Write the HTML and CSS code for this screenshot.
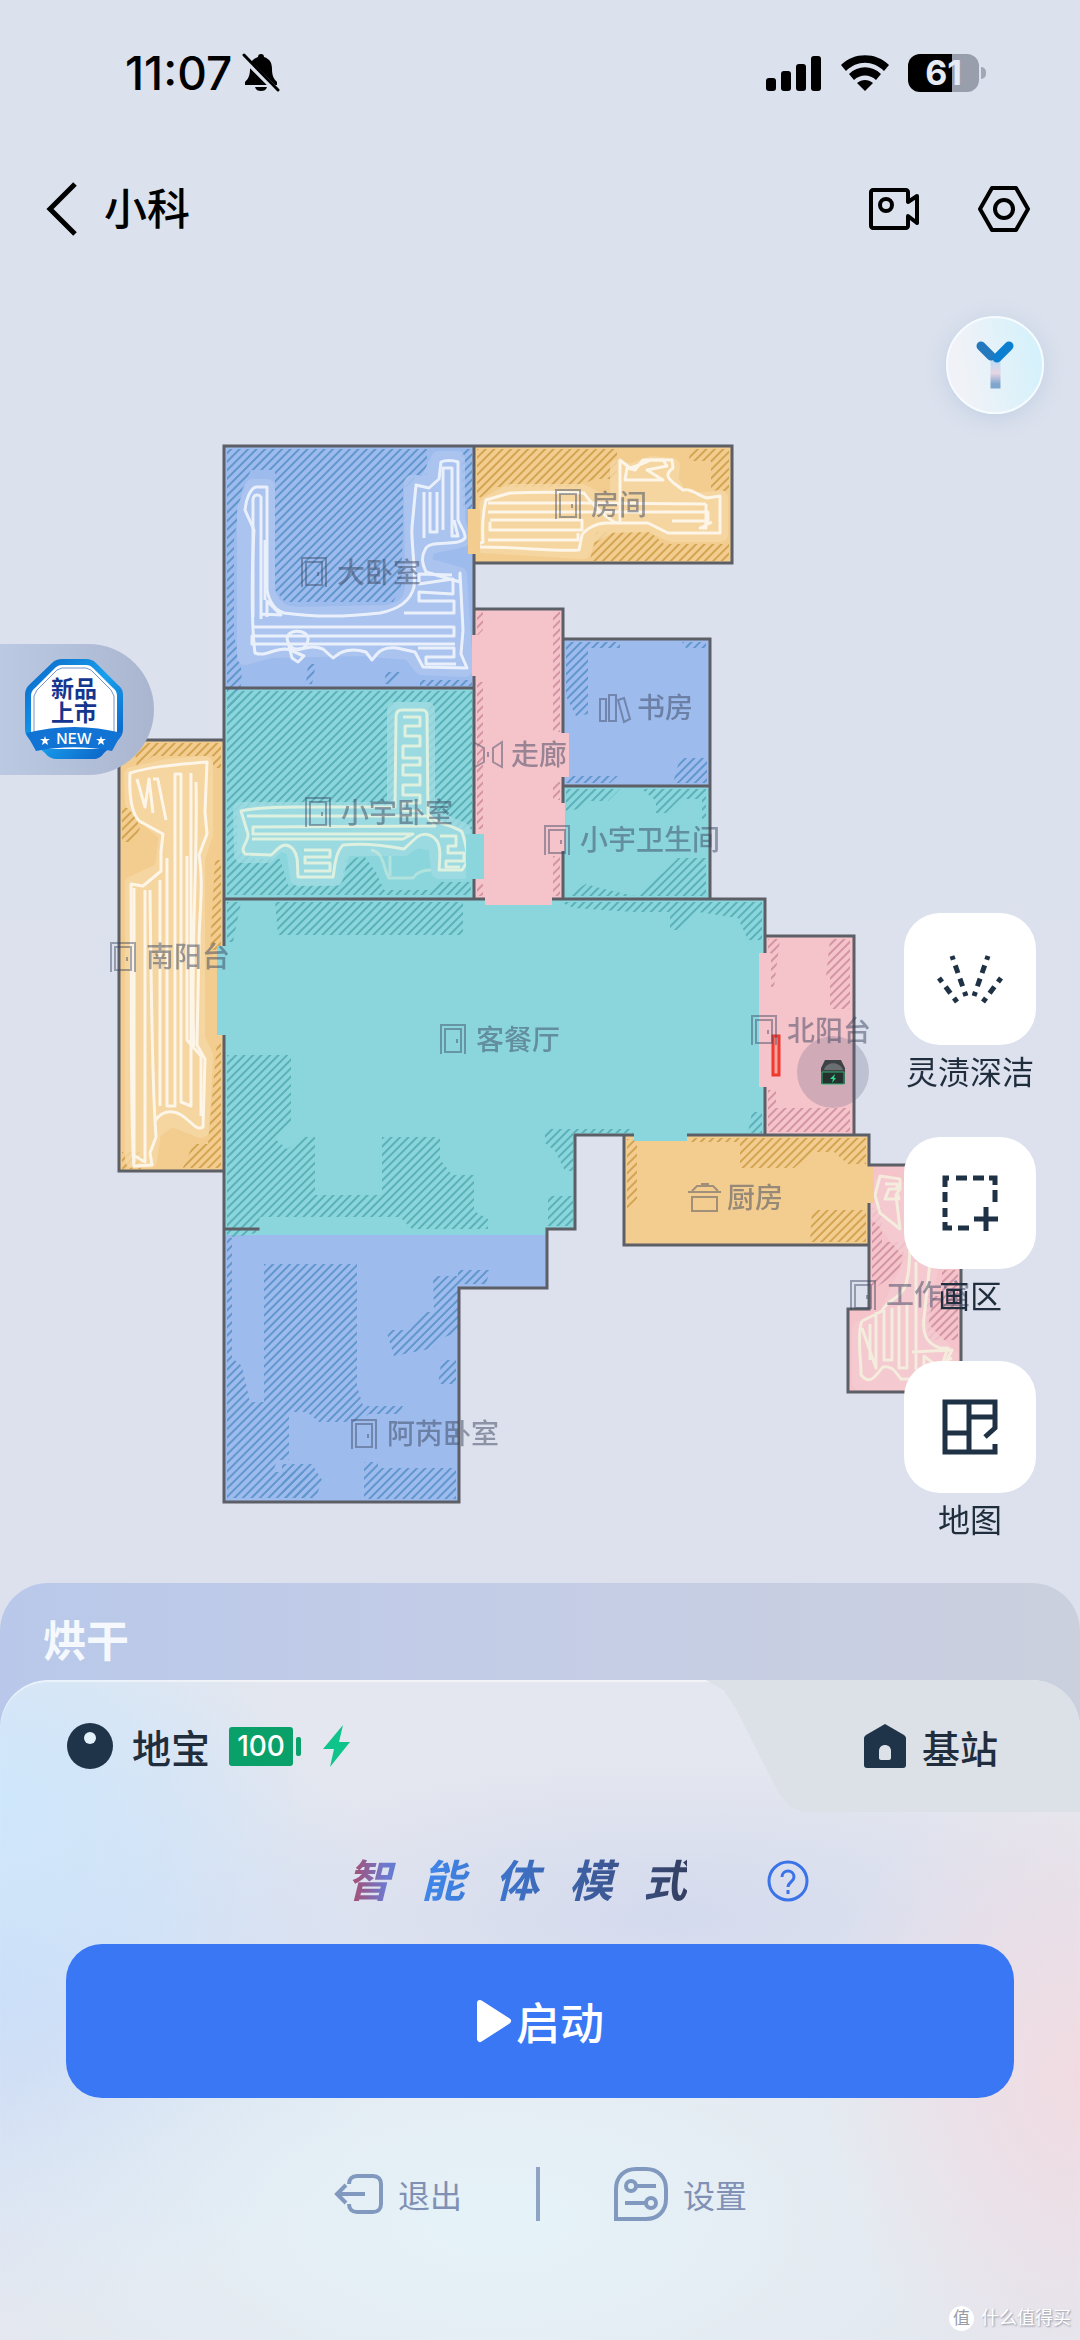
FILE: index.html
```html
<!DOCTYPE html>
<html lang="zh-CN">
<head>
    <meta charset="UTF-8">
    <meta name="viewport" content="width=device-width, initial-scale=1.0">
    <title>小科</title>
    <link rel="stylesheet" href="styles.css">
</head>
<body>
    <div class="status-bar">
        <div class="status-left">
            <span class="clock">11:07</span>
            <svg class="bell" width="38" height="40" viewBox="0 0 38 40">
                <path d="M19 1c2 0 3 1 3 3 6 2 8 6 8 12 0 7 2 10 5 13v3H3v-3c3-3 5-6 5-13 0-6 2-10 8-12 0-2 1-3 3-3z"/>
                <path d="M13 34h12c-1 3-3 4-6 4s-5-1-6-4z"/>
                <path d="M0 3l35 35" stroke="#dbe1ed" stroke-width="6"/>
                <path d="M2 2l34 35" stroke="#000" stroke-width="3" stroke-linecap="round"/>
            </svg>
        </div>
        <div class="status-right">
            <svg width="56" height="36" viewBox="0 0 56 36">
                <rect x="0" y="23" width="10" height="13" rx="3"/>
                <rect x="15" y="16" width="10" height="20" rx="3"/>
                <rect x="30" y="9" width="10" height="27" rx="3"/>
                <rect x="45" y="1" width="10" height="35" rx="3"/>
            </svg>
            <svg width="48" height="36" viewBox="0 0 48 36">
                <path d="M0 10C13-3 35-3 48 10l-5 6C32 5 16 5 5 16z"/>
                <path d="M8 19c9-9 23-9 32 0l-5 6c-6-6-16-6-22 0z"/>
                <path d="M16 28c5-4 11-4 16 0l-8 8z"/>
            </svg>
            <div class="phone-battery"><span>61</span></div>
        </div>
    </div>

    <header class="header">
        <button class="back" aria-label="返回">
            <svg width="32" height="54" viewBox="0 0 32 54"><path d="M29 2L4 27l25 25" fill="none" stroke="#000" stroke-width="5"/></svg>
        </button>
        <h1>小科</h1>
        <div class="header-actions">
            <button aria-label="视频">
                <svg width="52" height="44" viewBox="0 0 52 44" fill="none" stroke="#000" stroke-width="4">
                    <path d="M40 15V5c0-1-1-2-2-2H5C4 3 3 4 3 5v34c0 1 1 2 2 2h33c1 0 2-1 2-2V29l9 7V9z" stroke-linejoin="round"/>
                    <circle cx="18" cy="18" r="6"/>
                </svg>
            </button>
            <button aria-label="设置">
                <svg width="52" height="48" viewBox="0 0 52 48" fill="none" stroke="#000" stroke-width="4">
                    <path d="M14 3h24l12 21-12 21H14L2 24z" stroke-linejoin="round"/>
                    <circle cx="26" cy="24" r="9"/>
                </svg>
            </button>
        </div>
    </header>

    <main class="stage">
        <svg class="map" viewBox="0 272 1080 1311" role="img" aria-label="地图">
            <defs>
                <pattern id="hatch-blue" width="6" height="6" patternUnits="userSpaceOnUse" patternTransform="rotate(45)"><rect width="2" height="6" fill="#6296cf"/></pattern>
                <pattern id="hatch-teal" width="6" height="6" patternUnits="userSpaceOnUse" patternTransform="rotate(45)"><rect width="2" height="6" fill="#5ab1b8"/></pattern>
                <pattern id="hatch-orange" width="6" height="6" patternUnits="userSpaceOnUse" patternTransform="rotate(45)"><rect width="2" height="6" fill="#d3a552"/></pattern>
                <pattern id="hatch-pink" width="6" height="6" patternUnits="userSpaceOnUse" patternTransform="rotate(45)"><rect width="2" height="6" fill="#d394a4"/></pattern>
                <symbol id="door" viewBox="0 0 28 32">
                    <path d="M2 31V2h24v29M6 29V6h16v23zM18 16v4" fill="none" stroke-width="2"/>
                </symbol>
            </defs>

            <!-- room floors -->
            <g class="floors">
                <path class="blue" d="M224 446h250v242H224z"/>
                <path class="orange" d="M474 446h258v117H474z"/>
                <path class="teal" d="M224 688h250v211H224z"/>
                <path class="pink" d="M474 609h89v290h-89z"/>
                <path class="blue" d="M563 639h147v147H563z"/>
                <path class="teal" d="M563 786h147v113H563z"/>
                <path class="orange" d="M119 740h105v431H119z"/>
                <path class="teal" d="M224 899h541v236H575v94h-28v6H224z"/>
                <path class="blue" d="M224 1235h323v53h-88v214H224z"/>
                <path class="orange" d="M624 1135h245v110H624z"/>
                <path class="pink" d="M765 936h89v199h-89z"/>
                <path class="pink" d="M869 1165h92v227H848v-83h21z"/>
            </g>

            <!-- areas that were not cleaned -->
            <g fill="url(#hatch-blue)">
                <path d="M227 449h200v26h-12v12h-12v40l-2 60-8 15H285l-10-12v-120h-24l-9 20-8 50v95l8 38-4 40h-11z"/>
                <path d="M461 449h11v60h-9zM308 664h8l-4 20h-6zM386 672h14l-8 12h-8zM420 680h52v6h-52z"/>
                <path d="M566 642h54v6h-32v66l-12 2-10-20zM682 642h24v6h-20zM680 758h27v25h-34zM566 776h52l-8 7h-44z"/>
                <path d="M227 1238h5v120l10 8 8 36h14v-138h93v122l6 20h40l-4 8h-30l-12 8h-38l-12-10h-18v48h-12l-4 12h36v26h-82z"/>
                <path d="M433 1276h25v-6h32l-4 14h-28v48l-16 6-8 10-40 8-8-26h24l12-18h12zM441 1360h15v24h-18l2-12z"/>
                <path d="M282 1464h30l10 16-6 18h-34zM364 1462h14v6h78v31h-92z"/>
            </g>
            <g fill="url(#hatch-teal)">
                <path d="M227 691h245v138h-8l-35-12v-115h-34v103H255l-18 6v42h12l6 6h25l8 26h52l6-25 18-4 12 16 8 18h50l4-8h33v13H227z"/>
                <path d="M566 789h54l-12 12h-20l-10 8-12 2zM642 789h64v30h-4v-20h-22l-14 14h-10v-12zM664 872l14-14h28v38H566l20-12 14 4 34 8z"/>
                <path d="M227 902h14l-8 40h-6zM275 902h188v33H278zM560 902h202v38h-14l-10-22-40-6-20 18h-8v-18h-36l-60-4z"/>
                <path d="M227 1055h64v70l-16 14 12 10 16-12h12v58h67v-58h58v22l12 16h22v36l14 8v10h-76l-12-12H260l-4 16-20 4h-9z"/>
                <path d="M545 1129h88v4h-60v38h-8l-10-20-10-8zM548 1196h25v30h-25zM752 1112h10v21h-14z"/>
            </g>
            <g fill="url(#hatch-orange)">
                <path d="M477 449h140v30h-22l-20 8H497l-16 10h-4zM690 449h39v42h-18v-30h-22zM596 532h54l14 12h65v17H590z"/>
                <path d="M134 743h87v25h-8v-12h-60l-16 12zM122 808h10l8 20-6 14h-12zM215 860h6v90h-11zM217 1042h4v126h-38l10-24h15zM122 1152h20l4 17h-24z"/>
                <path d="M627 1139h10v60l-10 10zM690 1138h176v26h-18l-14-12h-20l-20 16h-54v-26h-50zM812 1210h54v32h-56z"/>
            </g>
            <g fill="url(#hatch-pink)">
                <path d="M477 612h6v18l-6 6zM553 612h7v120h-7zM477 682h6v147h-6zM553 782h7v18h-7zM477 884h6v12h-6zM553 856h7v40h-7z"/>
                <path d="M768 939h12l-6 48h-6zM830 939h20v70h-20v-32h-4zM768 1090h8v18h74v24h-82z"/>
                <path d="M872 1208h10v34h24l-4 20-6 12-24 16zM926 1296h32v44h-30zM942 1270h16v26h-16z"/>
            </g>

            <!-- cleaned band round each track -->
            <g class="glow">
                <path class="glow-blue" d="M245 510l8-23h14v105c6 16 14 22 30 23l90-2c15-3 24-8 26-25l-1-105 14 2 13-26h18v62l6 18-36 8-4 18 36 10 6 94-43-2-12-15-50-4-90 2-25 7z"/>
                <path class="glow-teal" d="M241 810h154V710h32v105l35 15 6 36-6 5h-23l-3-28-20-3-12 8h-61l-8 30h-37l-4-30-15-5-12 12h-25z"/>
                <path class="glow-orange" d="M482 545l6-41 23-12h70l37 18v-42l12 4 22-8 20 2-2 14 12 20h26l12-2v36h-48l-22-10-40 1-22 12-5 14z"/>
                <path class="glow-orange" d="M132 775l35-8 38-3v70l-8 24v180l8 18-4 74-30-12-18 14-4 28h-16V884l30-14 4-36-22-18-12-14z"/>
                <path class="glow-pink" d="M880 1185l22 5-2 18 6 40-20-26-10-10zM912 1262l18 5-10 60 30 30-20 25h-70v-53l25-10z"/>
            </g>

            <!-- robot tracks -->
            <g class="track">
                <path d="M245 510c1-12 6-22 11-23h11v103c2 11 8 20 17 23 28 4 62 4 96 0 20-4 31-14 34-26 2-20-3-42-2-60l4-42 13 3 10-9 2-17c4-2 12-2 17 0v58c3 8 8 12 7 18-8 10-36 0-40 12-5 8-1 18 1 22l34 10V573l3 57-2 24 6 14-44-1-8-15-18-4c-10-1-16 1-20 6l-5 6-6-8c-10-3-20-2-26 1l-7 5-10-9c-16-6-16 3-38 0-12 0-20 8-30 4-4-30-3-90-1-123z"/>
                <path d="M253 617V499c1-5 6-5 8-2v122M265 600v-60M261 614l20 1-14-14v16M252 627h202v9H252v8h203M315 636h139M404 613h50v-12h-35v-9l34 2v-15l-34 5v-10l33 1M424 492v46M430 492v40h7v-40M443 530v-62h9v68h6l-4-16M418 648h36v9h-28v7h30M288 642c-6-14 22-14 20-2-2 12-16 12-20 2l4 16 6 4 6-6-14-6z"/>
                <path d="M471 547l12-5c-1-15 0-30 3-42l24-7c22-1 50-1 74 0 8 12 28 30 34 30l2-1v-62l10 8c5-2 14-4 20-8h22l1 8c-8 6-6 10 2 16l8 6c10-2 14 6 24 8l13-2v37h-52l-20-10h-42c-10 0-20 6-24 12l-3 15c-30 2-60-4-108-3z"/>
                <path d="M488 503h94l124 1M488 512h220v9H672M490 520h92v10H490v-8M488 540h90v-7M625 480h38l-16-10 20-4-4-6h-20l-8 10-8-2zM706 504v24h-6l12-6"/>
                <path class="cream" d="M241 811c18-4 40-4 60-4h94l1-90c0-5 2-7 6-7h20c4 0 5 2 5 6l1 98c10 12 24 10 34 18 4 12 6 20 5 30l-5 8h-23c1-12 2-22-2-29-6-8-14-8-20-4l-13 12c-20-4-42-6-61-4-8 8-8 22-10 32h-35c-1-12 1-20-5-28-10-10-16 2-22 6l-26-1c-6-6 4-12 3-20z"/>
                <path class="cream" d="M247 816h180l8 10-182 1v7h160l-10 5H252M403 717h17v9h-15v10h15v10h-17v12h17v7h-17v10h17v10h-17v10h17v8h-18v8h20M304 850h26v7h-25v6h25v8h-26M440 836h16v10h-8v7h16v8h-18v6h14"/>
                <path class="cream faint" d="M371 850c14 2 12 20 18 28h24c4-6 10-8 18-8M390 856v20"/>
                <path d="M130 773c20-6 40-8 77-11l-2 50 2 22-8 21c5 30 0 60 0 90l-2 100 8 14-2 68c-8 6-16-14-30-15-8-1-14 3-18 9l1 16-6 16 2 12-18 1c-4-40-2-180-3-282l12 2 18-15v-19l2-18-20-11c-12-4-14-30-13-50z"/>
                <path d="M137 779l8 28 4-28 4 34M158 780l8 40M134 888v274M145 890v272l-10-6M150 890c1 90 2 180 5 230M160 880v226M167 858v248h8V774h6v328l10 4V773M196 782c2 80-6 180-2 264M187 856v184l14 16v60M153 779h6"/>
                <path class="cream" d="M880 1176l20 3v10l-4 6 4 34-20-16-5-18zM885 1184h12v5h-8l-4 10h14l-2-7M862 1321l20-10c6-12 14-10 22-22 6-12 6-36 6-52M930 1262l-6 56c-2 18 4 26 16 30h8l-8 22M862 1321c-6 14 0 46-1 54 10 12 16-2 22-8 8-2 12 4 18 12h14M862 1328l14 40v-56M870 1324v36M884 1310v50h8v-52M899 1306v62h8v-64M916 1262v108M912 1352l40-2-10 20-18-14v16l28-14"/>
            </g>

            <!-- walls -->
            <path class="walls" d="M474 508v-62H224v499M224 1036v466h235v-214h88v-59h28v-94h58M474 446h258v117H474M474 555v79M474 677v156M474 880v19M224 688h250M474 609h89v123M563 639h147v260M563 778v24M563 852v47M563 786h147M224 899h260M553 899h212v53M224 740H119v431h105M224 1229h34M624 1135v110h245M688 1135h181v30M765 936h89v199M765 1088v47M869 1204v105h-21v83h113v-227h-92"/>

            <!-- doorways -->
            <path class="orange" d="M468 509h12v45h-12z"/>
            <path class="pink" d="M472 635h10v41h-10zM554 733h15v44h-15zM554 803h11v48h-11zM485 890h67v15h-67zM759 953h12v134h-12z"/>
            <path class="teal" d="M466 834h18v45h-18zM217 946h12v89h-12zM634 1129h53v12h-53z"/>
            <path class="orange" d="M860 1167h14v36h-14z"/>

            <!-- forbidden line and dock -->
            <circle cx="833" cy="1072" r="36" fill="#5d5a78" opacity=".24"/>
            <rect x="773" y="1036" width="6" height="39" fill="#f6a49f" stroke="#f0392f" stroke-width="3"/>
            <g>
                <path d="M825 1060h16l4 8v16h-24v-16z" fill="#3d4346"/>
                <path d="M824 1070c2-9 16-9 19 0z" fill="#6a7072"/>
                <path d="M822 1072h22v12h-22z" fill="#24312f" stroke="#2fae72"/>
                <path d="M835 1074l-5 5h3l-1 4 4-5h-2z" fill="#27e08a"/>
            </g>

            <!-- room names -->
            <g class="door-icons">
                <use href="#door" x="554" y="488" width="28" height="32"/>
                <use href="#door" x="300" y="556" width="28" height="32"/>
                <use href="#door" x="304" y="796" width="28" height="32"/>
                <use href="#door" x="543" y="824" width="28" height="32"/>
                <use href="#door" x="439" y="1023" width="28" height="32"/>
                <use href="#door" x="109" y="941" width="28" height="32"/>
                <use href="#door" x="750" y="1014" width="28" height="32"/>
                <use href="#door" x="849" y="1279" width="28" height="32"/>
                <use href="#door" x="350" y="1418" width="28" height="32"/>
                <path d="M600 699h6v22h-6zM609 695h7v26h-7zM618 700l6-2 6 21-6 3zM475 743l9 5v14l-9 5M502 742l-9 6v14l9 5zM488 752v5M692 1191l5-5h16l5 5M688 1192h33M701 1184h8M692 1197h25v14h-25z"/>
            </g>
            <g class="room-names">
                <text x="591" y="515">房间</text>
                <text x="337" y="583">大卧室</text>
                <text x="341" y="823">小宇卧室</text>
                <text x="637" y="718">书房</text>
                <text x="511" y="765">走廊</text>
                <text x="580" y="850">小宇卫生间</text>
                <text x="476" y="1050">客餐厅</text>
                <text x="146" y="967">南阳台</text>
                <text x="787" y="1041">北阳台</text>
                <text x="727" y="1208">厨房</text>
                <text x="886" y="1305">工作室</text>
                <text x="387" y="1444">阿芮卧室</text>
            </g>
        </svg>

        <button class="assistant" aria-label="语音助手">
            <svg width="40" height="50" viewBox="0 0 40 50" fill="none" stroke-width="9" stroke-linecap="round">
                <defs>
                    <linearGradient id="stem" x1="0" y1="0" x2="0" y2="1">
                        <stop offset="0" stop-color="#b9dcf6"/>
                        <stop offset=".55" stop-color="#e6d5e2"/>
                        <stop offset="1" stop-color="#7fa6cf"/>
                    </linearGradient>
                </defs>
                <path d="M20 20v24h1V20z" stroke="url(#stem)"/>
                <path d="M6 6l10 10" stroke="#2478bd"/>
                <path d="M34 6L22 18" stroke="#0d7fd0"/>
            </svg>
        </button>

        <a class="promo" href="#">
            <svg width="104" height="104" viewBox="0 0 104 104">
                <defs>
                    <linearGradient id="rim" x1="0" y1="0" x2="1" y2="1">
                        <stop offset="0" stop-color="#0a63c4"/>
                        <stop offset=".5" stop-color="#18a0ee"/>
                        <stop offset="1" stop-color="#0a55bd"/>
                    </linearGradient>
                </defs>
                <path d="M40 2h24c4 0 7 1 10 4l22 22c4 3 5 6 5 10v34c0 5-2 8-5 11L82 96c-3 4-6 6-11 6H35c-5 0-9-2-12-6L8 83c-3-3-5-6-5-11V38c0-4 1-7 4-10L30 6c3-3 6-4 10-4z" fill="url(#rim)"/>
                <path d="M40 8h24c3 0 5 1 7 3l20 20c3 2 4 5 4 8v38L80 92H24L9 77V39c0-3 1-6 4-8l20-20c2-2 4-3 7-3z" fill="#fff"/>
                <path d="M40 11h24l5 2 20 20 3 6v36H12V39l3-6 20-20z" fill="none" stroke="#7595cd"/>
                <path d="M4 76c32-8 64-8 96 0l-10 18c-26-5-50-5-76 0z" fill="#1173d4"/>
                <path d="M23 79l1 3h4l-3 2 1 4-3-2-3 2 1-4-3-2h4zM79 79l1 3h4l-3 2 1 4-3-2-3 2 1-4-3-2h4z" fill="#fff"/>
            </svg>
            <span class="promo-text">新品<br>上市</span>
            <span class="promo-new">NEW</span>
        </a>

        <div class="tools">
            <button class="tool">
                <span class="tool-icon">
                    <svg width="66" height="52" viewBox="0 0 66 52" fill="none" stroke="#1f3144" stroke-width="5">
                        <path d="M15 3l14 40" stroke-dasharray="4 6 8 6 8 6 5"/>
                        <path d="M51 3L37 43" stroke-dasharray="4 6 8 6 8 6 5"/>
                        <path d="M2 25l18 24" stroke-dasharray="5 6 8 6 5"/>
                        <path d="M64 25L46 49" stroke-dasharray="5 6 8 6 5"/>
                    </svg>
                </span>
                灵渍深洁
            </button>
            <button class="tool">
                <span class="tool-icon">
                    <svg width="56" height="56" viewBox="0 0 56 56" fill="none" stroke="#1f3144" stroke-width="5">
                        <path d="M7 3H3v9M14 3h11M31 3h11M47 3h6v7M53 15v12M3 17v10M3 33v9M3 47v6h7M16 53h11M44 32v24M32 44h24"/>
                    </svg>
                </span>
                画区
            </button>
            <button class="tool">
                <span class="tool-icon">
                    <svg width="56" height="56" viewBox="0 0 56 56" fill="none" stroke="#1f3144" stroke-width="5">
                        <path d="M53 45v8H3V3h50v26L43 38M27 3v50M3 34h24M27 18h26"/>
                    </svg>
                </span>
                地图
            </button>
        </div>
    </main>

    <section class="sheet">
        <p class="sheet-status">烘干</p>
        <div class="card">
            <div class="tabs">
                <button class="tab tab-robot">
                    <svg width="46" height="46" viewBox="0 0 46 46"><circle cx="23" cy="23" r="23" fill="#1f3449"/><circle cx="23" cy="15" r="6" fill="#e2f1fa"/></svg>
                    地宝
                    <span class="robot-battery">100</span>
                    <svg class="bolt" width="30" height="42" viewBox="0 0 30 42"><path d="M21 0L1 24h11L8 42l20-25H17z" fill="#0fc48a"/></svg>
                </button>
                <button class="tab tab-dock">
                    <svg width="42" height="44" viewBox="0 0 42 44">
                        <path d="M21 0l19 11c1 1 2 2 2 3v27c0 2-1 3-3 3H3c-2 0-3-1-3-3V14c0-1 1-2 2-3z" fill="#1f3449"/>
                        <path d="M15 34v-7c0-8 12-8 12 0v7c0 1-1 2-2 2h-8c-1 0-2-1-2-2z" fill="#dde1e8"/>
                    </svg>
                    基站
                </button>
            </div>

            <div class="mode">
                <h2><span>智</span><span>能</span><span>体</span><span>模</span><span>式</span></h2>
                <button aria-label="帮助">
                    <svg width="42" height="42" viewBox="0 0 42 42" fill="none" stroke="#3b73e8" stroke-width="3">
                        <circle cx="21" cy="21" r="19"/>
                        <path d="M15 17c0-8 12-8 12 0 0 5-6 5-6 10"/>
                        <path d="M21 30v4"/>
                    </svg>
                </button>
            </div>

            <button class="start">
                <svg width="36" height="44" viewBox="0 0 36 44"><path d="M4 4l28 18L4 40z" fill="#fff" stroke="#fff" stroke-width="6" stroke-linejoin="round"/></svg>
                启动
            </button>

            <div class="actions">
                <button>
                    <svg width="50" height="40" viewBox="0 0 50 40" fill="none" stroke="#8299bf" stroke-width="4">
                        <path d="M16 10c0-5 3-8 8-8h16c5 0 8 3 8 8v20c0 5-3 8-8 8H24c-5 0-8-3-8-8M32 20H4M13 11l-9 9 9 9"/>
                    </svg>
                    退出
                </button>
                <span class="divider"></span>
                <button>
                    <svg width="54" height="54" viewBox="0 0 54 54" fill="none" stroke="#8299bf" stroke-width="4">
                        <path d="M2 52V22C2 10 10 2 22 2h10c12 0 20 8 20 20v10c0 12-8 20-20 20z"/>
                        <circle cx="17" cy="19" r="5"/>
                        <circle cx="37" cy="36" r="5"/>
                        <path d="M22 19h20M11 36h21"/>
                    </svg>
                    设置
                </button>
            </div>
        </div>
    </section>

    <div class="watermark"><span class="watermark-logo">值</span>什么值得买</div>
</body>
</html>
```
FILE: styles.css
```css
:root {
    --ink: #1f2d3d;
    --muted: #8090b4;
    --primary: #3a77f5;
    --blue: #9dbbec;
    --teal: #8ad6dc;
    --orange: #f3cd90;
    --pink: #f5c3ca;
    --wall: #5c5f66;
}

* {
    margin: 0;
    padding: 0;
    box-sizing: border-box;
}

body {
    position: relative;
    min-height: 100vh;
    display: flex;
    flex-direction: column;
    font-family: 'Inter', 'Noto Sans CJK SC', sans-serif;
    color: var(--ink);
    background: linear-gradient(#dbe1ed, #dde1ed);
}

button {
    font: inherit;
    color: inherit;
    background: none;
    border: none;
    cursor: pointer;
}

svg {
    display: block;
    flex-shrink: 0;
}

/* phone status bar */
.status-bar {
    height: 146px;
    padding: 0 101px 0 125px;
    display: flex;
    justify-content: space-between;
    align-items: center;
    color: #000;
}

.status-left {
    display: flex;
    align-items: center;
    gap: 10px;
}

.clock {
    font-size: 46px;
    font-weight: 500;
}

.status-right {
    display: flex;
    align-items: center;
    gap: 19px;
}

.phone-battery {
    position: relative;
    width: 71px;
    height: 38px;
    border-radius: 12px;
    background: linear-gradient(90deg, #000 62%, #999eac 62%);
    color: #e6eaf2;
    font-size: 34px;
    font-weight: 700;
    line-height: 38px;
    text-align: center;
}

.phone-battery::after {
    content: "";
    position: absolute;
    right: -7px;
    top: 13px;
    width: 5px;
    height: 12px;
    border-radius: 0 5px 5px 0;
    background: #a2a7b4;
}

/* title bar */
.header {
    height: 126px;
    padding: 0 50px 0 46px;
    display: flex;
    align-items: center;
    color: #000;
}

.header h1 {
    margin-left: 26px;
    font-size: 43px;
    font-weight: 500;
    line-height: 60px;
}

.header-actions {
    margin-left: auto;
    display: flex;
    align-items: center;
    gap: 58px;
}

/* map */
.stage {
    position: relative;
}

.map {
    width: 100%;
    height: auto;
}

.blue { fill: var(--blue); }
.teal { fill: var(--teal); }
.orange { fill: var(--orange); }
.pink { fill: var(--pink); }

.walls {
    fill: none;
    stroke: var(--wall);
    stroke-width: 3;
    stroke-linecap: square;
}

.glow path {
    stroke-width: 16;
    stroke-linejoin: round;
    opacity: .8;
}

.glow-blue { fill: #afc7f0; stroke: #afc7f0; }
.glow-teal { fill: #9edbe2; stroke: #9edbe2; }
.glow-orange { fill: #f6d9a6; stroke: #f6d9a6; }
.glow-pink { fill: #f4cbd2; stroke: #f4cbd2; }

.track {
    fill: none;
    stroke: #fff;
    stroke-width: 3;
    stroke-linejoin: round;
    opacity: .75;
}

.track .cream {
    stroke: #f5f7e0;
}

.track .faint {
    opacity: .5;
}

.door-icons {
    fill: none;
    stroke: #3c4660;
    stroke-width: 2;
    opacity: .45;
}

.room-names {
    fill: #3c4660;
    font-size: 28px;
    font-weight: 500;
    opacity: .5;
}

.assistant {
    position: absolute;
    top: 44px;
    right: 36px;
    width: 98px;
    height: 98px;
    display: flex;
    align-items: center;
    justify-content: center;
    border: 2px solid #f6fbff;
    border-radius: 50%;
    background: linear-gradient(80deg, #f0f2f7 20%, #d5f1fb 90%);
    box-shadow: 0 4px 20px rgba(120, 160, 200, .25);
}

.promo {
    position: absolute;
    top: 372px;
    left: 0;
    width: 154px;
    height: 131px;
    padding: 13px 0 0 22px;
    border-radius: 0 66px 66px 0;
    background: linear-gradient(90deg, #bcc9e3, #aab6d0);
    text-decoration: none;
    text-align: center;
}

.promo-text {
    position: absolute;
    top: 33px;
    left: 22px;
    width: 104px;
    color: #15368f;
    font-size: 23px;
    font-weight: 700;
    line-height: 24px;
}

.promo-new {
    position: absolute;
    top: 85px;
    left: 22px;
    width: 104px;
    color: #fff;
    font-size: 15px;
    font-weight: 500;
    line-height: 20px;
}

.tools {
    position: absolute;
    top: 641px;
    right: 44px;
    display: flex;
    flex-direction: column;
    gap: 42px;
}

.tool {
    display: flex;
    flex-direction: column;
    align-items: center;
    gap: 6px;
    font-size: 32px;
    line-height: 44px;
}

.tool-icon {
    width: 132px;
    height: 132px;
    display: flex;
    align-items: center;
    justify-content: center;
    border-radius: 36px;
    background: #fff;
}

/* bottom sheet */
.sheet {
    flex: 1;
    display: flex;
    flex-direction: column;
    border-radius: 48px 48px 0 0;
    background: linear-gradient(90deg, #b9c8ea, #c4cde6 50%, #cbd0de);
}

.sheet-status {
    height: 97px;
    padding: 28px 43px 0;
    color: #f5f8fc;
    font-size: 43px;
    font-weight: 700;
    line-height: 60px;
}

.card {
    flex: 1;
    border-radius: 48px 48px 0 0;
    box-shadow: inset 0 2px 1px rgba(255, 255, 255, .5);
    background:
        radial-gradient(ellipse 260px 330px at 100% 60%, #f1dbe2, rgba(241, 219, 226, 0)),
        radial-gradient(ellipse 560px 280px at 46% 82%, #e5f3f8, rgba(229, 243, 248, 0)),
        radial-gradient(ellipse 300px 280px at 0 18%, #cfe7fb, rgba(207, 231, 251, 0)),
        radial-gradient(ellipse 420px 340px at 0 45%, #c9dcf8, rgba(201, 220, 248, 0)),
        radial-gradient(ellipse 500px 160px at 62% 36%, #d4daee, rgba(212, 218, 238, 0)),
        #e4e7ef;
}

.tabs {
    height: 132px;
    display: flex;
    justify-content: space-between;
}

.tab {
    display: flex;
    align-items: center;
    color: var(--ink);
    font-size: 39px;
    font-weight: 500;
}

.tab-robot {
    gap: 19px;
    padding: 0 0 0 67px;
}

.robot-battery {
    position: relative;
    width: 64px;
    height: 39px;
    border-radius: 3px;
    background: #0aa06a;
    color: #fff;
    font-size: 28px;
    line-height: 39px;
    text-align: center;
}

.robot-battery::after {
    content: "";
    position: absolute;
    right: -8px;
    top: 10px;
    width: 5px;
    height: 19px;
    border-radius: 2px;
    background: #0aa06a;
}

.bolt {
    margin-left: 10px;
}

.tab-dock {
    width: 380px;
    justify-content: flex-end;
    gap: 16px;
    padding: 0 82px 0 0;
    border-top-right-radius: 48px;
    background: #dce0e7;
    font-size: 38px;
    clip-path: polygon(6px 0, 100% 0, 100% 100%, 104px 100%, 90px 96%, 78px 85%, 36px 22%, 24px 8%);
}

.mode {
    height: 132px;
    padding: 6px 0 0 76px;
    display: flex;
    align-items: center;
    justify-content: center;
    gap: 80px;
}

.mode h2 {
    display: flex;
    gap: 30px;
    font-size: 44px;
    font-weight: 700;
    font-style: italic;
    line-height: 64px;
    color: transparent;
    background: linear-gradient(90deg, #b04864, #6f78cc 11%, #3f86e8 24%, #3d70c4 50%, #3d5a98 75%, #343f60);
    background-clip: text;
    -webkit-background-clip: text;
}

.start {
    width: calc(100% - 132px);
    height: 154px;
    margin: 0 66px;
    display: flex;
    align-items: center;
    justify-content: center;
    gap: 4px;
    border-radius: 36px;
    background: var(--primary);
    color: #fff;
    font-size: 44px;
    font-weight: 500;
}

.actions {
    padding-top: 69px;
    display: flex;
    align-items: center;
    justify-content: center;
    gap: 74px;
}

.actions button {
    display: flex;
    align-items: center;
    gap: 15px;
    color: var(--muted);
    font-size: 32px;
}

.divider {
    width: 4px;
    height: 54px;
    background: #8fa3c6;
}

.watermark {
    position: absolute;
    right: 9px;
    bottom: 8px;
    display: flex;
    align-items: center;
    gap: 7px;
    color: #fff;
    font-size: 18px;
    line-height: 28px;
    text-shadow: 1px 1px 2px #8b8f9c;
}

.watermark-logo {
    width: 25px;
    height: 25px;
    border-radius: 50%;
    background: #fff;
    color: #999ca6;
    font-size: 17px;
    line-height: 25px;
    text-align: center;
    text-shadow: none;
}
```
